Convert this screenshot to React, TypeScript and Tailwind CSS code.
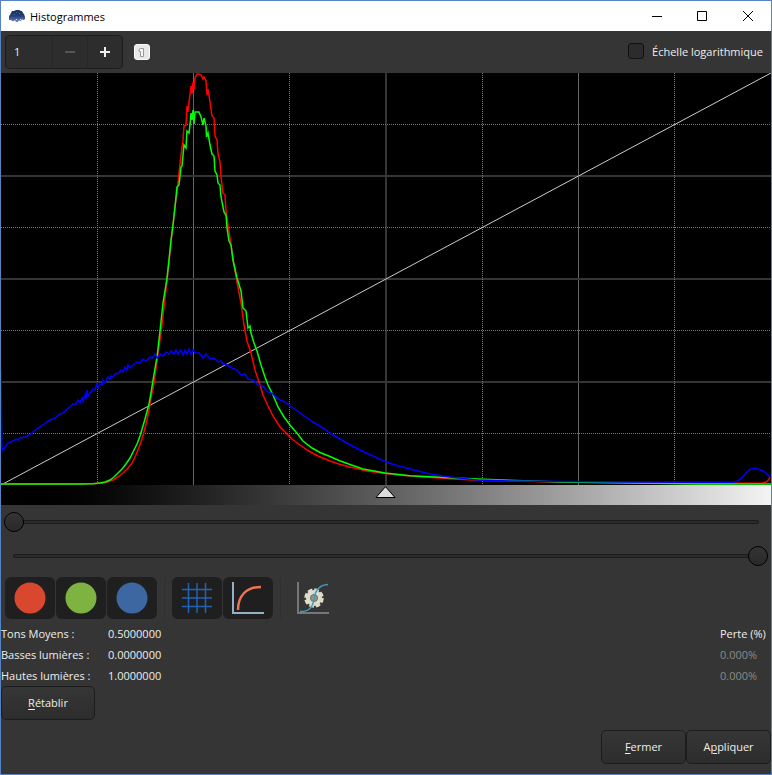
import { useState } from "react";

const RED =
  "0,411 80,411 95,410.5 105,409.5 112,407 117,404 122,400 127,395 131,390 134,384 137,377 140,369 143,359 145,351 148,337 150,325 153,310 156,288 160,260 163,234 166,208 168,189 171,160 172,152 174,134 176,120 178,100 180,82 182,67 183,53 185,52 186,33 187,39 188,29 190,13 191,21 192,9 193,16 194,5 196,1 198,1 200,2 202,6 203,4 205,8 206,22 207,16 209,29 211,43 213,45 214,63 216,67 217,81 219,89 220,104 222,120 224,122 225,138 227,152 229,165 231,178 232,187 236,209 240,230 243,252 246,268 250,280 254,297 259,312 262,322 267,333 272,343 279,354 286,361 291,366 299,372 307,377.5 317,383 329,388 338,391 349,394 366,398 384,400.5 409,403 449,405.7 482,407.5 560,409 700,410.5 762,410 765,409 767,407.5 769,404";

const GREEN =
  "0,411 80,411 92,410.8 99,410 104,409 109,407 113,404 117,400 121,396 125,391 129,385 132,379 136,371 139,363 142,353 144,346 148,331 150,320 152,307 156,284 159,258 162,230 166,205 168,187 170,167 172,152 174,134 176,114 178,112 180,94 181,93 183,72 185,75 186,58 188,60 189,52 190,40 191,47 192,37 193,51 194,39 198,39 200,44 202,52 203,45 205,53 205.5,64 207,60 209,72 211,81 213,83 214,98 216,102 217,110 219,112 220,124 223,139 225,142 226,155 228,168 230,172 232,187 236,205 240,218 242,235 245,238 247,255 249,253 250,260 253,270 256,278 260,292 264,304 267,312 272,322 277,334 283,344 289,352 295,359 302,368 311,375 319,379.5 329,383.5 338,387.5 349,391.5 362,396 384,400 409,402.7 449,404.7 482,406.3 560,409 700,411 770,411";

const BLUE =
  "0,297 0.7,374 1.7,377 4,374 7,370 12,368 15,366 17,367 19,365 24,364 28,362 32,359 37,355 42,352 47,348 54,345 59,341 62,340 66,336 69,334 72,331 75,331 77,327 79,330 81,325 82,328 84,322 85,326 86,317 87,323 90,319 92,316 94,317 96,310 97,315 99,311 101,312 102,307 104,310 107,304 109,306 110,303 112,304 114,301 118,300 120,297 122,299 124,294 126,297 127,292 129,295 132,292 136,289 139,290 142,286 145,288 149,284 151,285 154,281 156,285 160,281 162,283 165,279 168,281 170,278 173,281 175,277 177,281 180,277 182,282 184,277 186,281 188,276 190,281 192,277 194,280 198,280 202,285 205,281 209,286 213,285 217,289 220,288 222,291 226,292 231,295 236,297 240,302 244,301 247,306 252,307 257,312 262,313 267,319 272,321 277,326 282,328 292,335 302,342 312,349 322,355 329,360 344,369 359,377 374,384 384,388.5 396,392.5 409,396 429,401 449,404 476,407 509,408 620,409 731,409.3 736,408.3 741,405 745,400 749,396.5 754,395 758,396.5 761,397.5 764,399 766,401 769,404";

function Plot() {
  return (
    <svg
      className="block w-full h-[412px] bg-black"
      viewBox="0 0 770 412"
      preserveAspectRatio="none"
      fill="none"
      role="img"
      aria-label="Histogramme">
      <g stroke="#666">
        <path d="M192.5 0V412M577.5 0V412" />
        <path stroke="#353535" strokeWidth="2" d="M385 0V412M0 103H770M0 206H770M0 309H770" />
        <path
          stroke="#777"
          strokeDasharray="1 1"
          d="M96.5 0V412M288.5 0V412M481.5 0V412M673.5 0V412M0 51.5H770M0 154.5H770M0 257.5H770M0 360.5H770"
        />
      </g>
      <path stroke="#ccc" d="M0 412L770 0" />
      <polyline stroke="#f00" strokeWidth="1.5" points={RED} />
      <polyline stroke="#0f0" strokeWidth="1.5" points={GREEN} />
      <polyline stroke="#00f" strokeWidth="1.5" points={BLUE} />
    </svg>
  );
}

function AppIcon() {
  return (
    <svg width="16" height="13" viewBox="0 0 16 13">
      <defs>
        <linearGradient id="night" x1="0" y1="0" x2="0" y2="1">
          <stop offset="0" stopColor="#17325f" />
          <stop offset="0.5" stopColor="#253f7c" />
          <stop offset="1" stopColor="#7187bd" />
        </linearGradient>
      </defs>
      <path
        fill="url(#night)"
        d="M3 1H5L7 0H10L12 1H13L14 3L15 4L16 7V9L15 10H14L13 9L12 11H11L10 10L9 12H7L6 10L5 11H3L2 10H0V6L1 5L2 3Z"
      />
      <path fill="#3c7288" d="M7 2h1v1H7zM10 3h1v1h-1zM5 4h1v1H5z" />
      <path fill="#dfe6f2" d="M4 11h1v1H4zM11 9h1v1h-1zM7 9h1v1H7z" />
    </svg>
  );
}

function Slider({ label, initial }: { label: string; initial: number }) {
  const [value, setValue] = useState(initial);
  return (
    <div className="grid items-center h-[34px] px-[3px]">
      <div className="[grid-area:1/1] h-1 mx-[9px] rounded-sm bg-[#2a2a2a] border border-[#1c1c1c]" />
      <input
        type="range"
        aria-label={label}
        min={0}
        max={65535}
        value={value}
        onChange={(e) => setValue(Number(e.target.value))}
        className="[grid-area:1/1] w-full h-5 appearance-none bg-transparent outline-none [&::-webkit-slider-thumb]:appearance-none [&::-webkit-slider-thumb]:size-5 [&::-webkit-slider-thumb]:rounded-full [&::-webkit-slider-thumb]:border [&::-webkit-slider-thumb]:border-black [&::-webkit-slider-thumb]:bg-linear-to-b [&::-webkit-slider-thumb]:from-[#343434] [&::-webkit-slider-thumb]:to-[#292929]"
      />
    </div>
  );
}

function Toggle({ label, children }: { label: string; children: React.ReactNode }) {
  const [on, setOn] = useState(true);
  return (
    <button
      type="button"
      aria-label={label}
      aria-pressed={on}
      onClick={() => setOn(!on)}
      className="flex items-center justify-center w-[50px] h-[42px] rounded-md bg-[#353535] aria-pressed:bg-[#1f1f1f]">
      {children}
    </button>
  );
}

function Disc({ color }: { color: string }) {
  return (
    <svg width="32" height="32" viewBox="0 0 32 32">
      <circle cx="16" cy="16" r="15.5" fill={color} />
    </svg>
  );
}

function Separator() {
  return <div className="w-px h-[42px] mx-[6px] bg-[#303030]" />;
}

function Toolbar() {
  return (
    <div className="flex items-center gap-px pl-1">
      <Toggle label="Rouge">
        <Disc color="#d9472f" />
      </Toggle>
      <Toggle label="Vert">
        <Disc color="#7fb341" />
      </Toggle>
      <Toggle label="Bleu">
        <Disc color="#3d67a0" />
      </Toggle>
      <Separator />
      <Toggle label="Grille">
        <svg width="32" height="32" viewBox="0 0 32 32" stroke="#2263b5" strokeWidth="1.5">
          <path d="M7.5 1V31M16 1V31M24.5 1V31M1 7.5H31M1 16H31M1 24.5H31" />
        </svg>
      </Toggle>
      <Toggle label="Courbe">
        <svg width="34" height="34" viewBox="0 0 34 34" fill="none">
          <path stroke="#93b1c2" strokeWidth="2" d="M2 1V32H33" />
          <path stroke="#ed7354" strokeWidth="2.5" d="M7 29C7 15 15 6 30 6" />
        </svg>
      </Toggle>
      <Separator />
      <button
        type="button"
        aria-label="Ajustement automatique"
        className="flex items-center justify-center w-[50px] h-[42px]">
        <svg width="34" height="34" viewBox="0 0 34 34" fill="none">
          <path stroke="#777" strokeWidth="2" d="M2 1V32H33" />
          <circle cx="18" cy="17" r="8" fill="#e0dccb" />
          <circle cx="18" cy="17" r="8.5" stroke="#e0dccb" strokeWidth="2.5" strokeDasharray="4.7 1.98" />
          <circle cx="18" cy="17" r="3.5" fill="#96968a" stroke="#686862" />
          <path stroke="#37a2c0" strokeWidth="1.5" d="M4 30.5C13 31 17 26 18 18S23 4 32 3.5" />
        </svg>
      </button>
    </div>
  );
}

const push =
  "h-[34px] pb-0.5 rounded-[5px] border border-[#1c1c1c] bg-linear-to-b from-[#363636] to-[#2d2d2d] text-center";

const rows = [
  { label: "Tons Moyens :", value: "0.5000000", loss: "Perte (%)" },
  { label: "Basses lumières :", value: "0.0000000", loss: "0.000%" },
  { label: "Hautes lumières :", value: "1.0000000", loss: "0.000%" },
];

export default function App() {
  const [zoom, setZoom] = useState(1);
  const [log, setLog] = useState(false);

  return (
    <div className="flex flex-col min-h-screen bg-[#353535] border border-[#5683c5] font-['Open_Sans',sans-serif] text-[11px] leading-[21px] text-[#eeeeec]">
      <header className="flex items-center h-[30px] pl-2 bg-white text-black">
        <AppIcon />
        <h1 className="flex-1 pl-[5px]">Histogrammes</h1>
        <button type="button" aria-label="Réduire" className="flex justify-center w-[45px]">
          <svg width="10" height="10" stroke="#000">
            <path d="M0 5.5H10" />
          </svg>
        </button>
        <button type="button" aria-label="Agrandir" className="flex justify-center w-[45px]">
          <svg width="10" height="10" stroke="#000" fill="none">
            <path d="M.5 .5H9.5V9.5H.5Z" />
          </svg>
        </button>
        <button type="button" aria-label="Fermer la fenêtre" className="flex justify-center w-[47px]">
          <svg width="10" height="10" stroke="#000">
            <path d="M0 0L10 10M10 0L0 10" />
          </svg>
        </button>
      </header>

      <div className="flex items-center h-[42px] pl-1 pr-2">
        <div className="flex w-[118px] h-[34px] rounded-[4px] border border-[#1c1c1c] bg-[#2d2d2d]">
          <input
            type="text"
            aria-label="Zoom"
            value={zoom}
            onChange={(e) => setZoom(Number(e.target.value) || 1)}
            className="flex-1 min-w-0 pl-2 pb-0.5 bg-transparent outline-none"
          />
          <button
            type="button"
            aria-label="Diminuer"
            disabled={zoom === 1}
            onClick={() => setZoom(zoom - 1)}
            className="flex items-center justify-center w-[35px] border-l border-[#282828] disabled:text-[#555]">
            <svg width="10" height="10" stroke="currentColor" strokeWidth="2">
              <path d="M0 5H10" />
            </svg>
          </button>
          <button
            type="button"
            aria-label="Augmenter"
            onClick={() => setZoom(zoom + 1)}
            className="flex items-center justify-center w-[35px] border-l border-[#282828]">
            <svg width="10" height="10" stroke="currentColor" strokeWidth="2">
              <path d="M0 5H10M5 0V10" />
            </svg>
          </button>
        </div>
        <button type="button" aria-label="Zoom 1:1" onClick={() => setZoom(1)} className="ml-[11px]">
          <svg width="16" height="16" viewBox="0 0 16 16">
            <rect x="0.5" y="0.5" width="15" height="15" rx="2.5" fill="#e8e8e8" stroke="#fafafa" />
            <path fill="#f6f6f6" stroke="#999" d="M5 5.5L6.5 4.5H9.5V12.5H6.5V7.5H5Z" />
          </svg>
        </button>
        <label className="flex items-center gap-2 ml-auto pb-0.5">
          <input
            type="checkbox"
            checked={log}
            onChange={(e) => setLog(e.target.checked)}
            className="appearance-none size-4 rounded-[3px] border border-[#121212] bg-[#2c2c2c] checked:bg-[#3d67a0]"
          />
          Échelle logarithmique
        </label>
      </div>

      <Plot />
      <div className="flex justify-center h-5 pt-px bg-linear-to-r from-black to-[#f4f4f4]">
        <svg width="22" height="12" viewBox="0 0 22 12">
          <path fill="#ddd" stroke="#000" d="M10.5 .7L20 11.5H1Z" />
        </svg>
      </div>
      <Slider label="Basses lumières" initial={0} />
      <Slider label="Hautes lumières" initial={65535} />

      <div className="mt-1">
        <Toolbar />
      </div>

      <div className="flex flex-col items-start mt-1">
        <table className="w-full">
          <tbody>
            {rows.map((row, i) => (
              <tr key={row.label}>
                <th scope="row" className="w-[107px] p-0 text-left font-normal">
                  {row.label}
                </th>
                <td className="p-0">{row.value}</td>
                <td className={i === 0 ? "w-[51px] p-0" : "w-[51px] p-0 text-[#8b8b89]"}>{row.loss}</td>
              </tr>
            ))}
          </tbody>
        </table>
        <button type="button" className={`${push} w-[94px]`}>
          <u className="underline-offset-2">R</u>établir
        </button>
      </div>

      <footer className="flex justify-end mt-auto pb-[10px]">
        <button type="button" className={`${push} w-[85px]`}>
          <u className="underline-offset-2">F</u>ermer
        </button>
        <button type="button" className={`${push} w-[85px]`}>
          A<u className="underline-offset-2">p</u>pliquer
        </button>
      </footer>
    </div>
  );
}
